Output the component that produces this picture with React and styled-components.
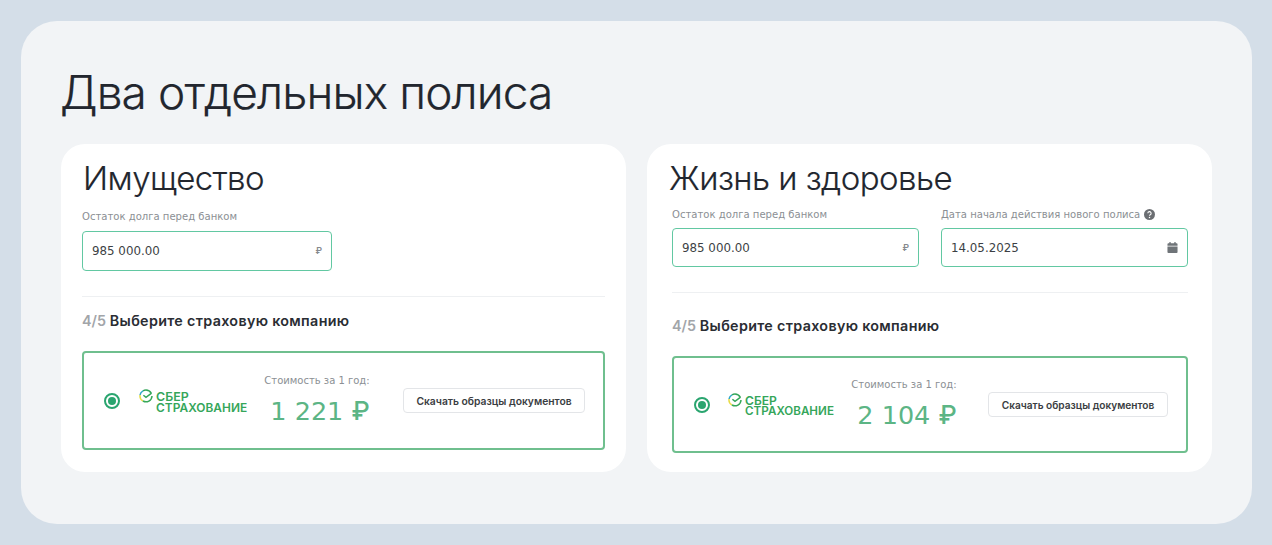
import React from "react";
import styled, { createGlobalStyle } from "styled-components";

const Global = createGlobalStyle`
  html, body { margin: 0; padding: 0; background: #d4dee8; }
  * { box-sizing: border-box; }
  body { font-family: "Inter", sans-serif; }
`;
const Page = styled.div`
  width: 1272px; height: 545px; padding: 21px 20px 21px 21px; overflow: hidden;
`;
const Panel = styled.main`
  width: 1231px; height: 503px; background: #f2f4f6; border-radius: 36px; padding: 40px 40px 0;
`;
const Title = styled.h1`
  margin: 0 0 0 -1px; height: 83px; font: 300 46px/62px "Inter", sans-serif; color: #22262e; letter-spacing: -0.88px;
  -webkit-text-stroke: 0.2px #22262e;
`;
const Cards = styled.div`
  display: grid; grid-template-columns: 565px 565px; gap: 21px;
`;
const Card = styled.section`
  height: 328px; background: #fff; border-radius: 24px;
  padding: ${p => p.$pad};
`;
const CardTitle = styled.h2`
  margin: 0 0 0 ${p => p.$shift}px; font: 300 33px/40px "Inter", sans-serif; color: #22262e; letter-spacing: -0.55px;
  -webkit-text-stroke: 0.15px #22262e;
`;
const Fields = styled.div`
  display: flex; gap: 22px; margin-top: ${p => p.$top}px;
`;
const Field = styled.div`
  width: ${p => p.$w}px;
`;
const Label = styled.div`
  display: flex; align-items: center; gap: 4px; white-space: nowrap;
  font: 400 10.05px/13px "DejaVu Sans", sans-serif; color: #8b8f94;
  margin-bottom: ${p => p.$gap}px;
`;
const Input = styled.div`
  height: ${p => p.$h}px; border: 1px solid #62c8a2; border-radius: 4px; padding: 0 9px;
  display: flex; align-items: center; justify-content: space-between;
  font: 400 11.85px/16px "DejaVu Sans", sans-serif; color: #3c3f44; background: #fff;
`;
const Suffix = styled.span`
  font: 600 9px/12px "Inter", sans-serif; color: #85898e;
`;
const Divider = styled.hr`
  margin: ${p => p.$top}px 0 0; border: 0; border-top: 1px solid #eef0f2;
`;
const Step = styled.div`
  margin-top: ${p => p.$top}px; font: 600 14.3px/18px "Inter", sans-serif; color: #2a2d33; letter-spacing: 0.33px;
`;
const StepNum = styled.span`
  color: #a2a5a9; letter-spacing: 0;
`;
const Offer = styled.div`
  margin-top: ${p => p.$top}px; height: ${p => p.$h}px; border: 2px solid #6fbf8e; border-radius: 4px;
  display: flex; align-items: center; padding-left: ${p => p.$pl}px;
`;
const Radio = styled.span`
  width: 16px; height: 16px; border-radius: 50%; border: 2px solid #2aa56f; flex: none;
  display: flex; align-items: center; justify-content: center;
  &::after { content: ""; width: 8px; height: 8px; border-radius: 50%; background: #2aa56f; }
`;
const Logo = styled.div`
  margin-left: ${p => p.$ml}px; width: 110px; flex: none; position: relative; padding: 2px 0 0 17px;
  color: #35a65a; font: 600 ${p => p.$size + 0.5}px/11px "Inter", sans-serif;
`;
const LogoMark = styled.svg`
  position: absolute; left: 0; top: 0;
`;
const LogoBottom = styled.div`
  font-size: ${p => p.$size}px; letter-spacing: 0.05px; white-space: nowrap;
`;
const Cost = styled.div`
  margin-left: ${p => p.$ml}px; width: ${p => p.$w}px; flex: none; display: flex; flex-direction: column; align-items: center;
`;
const CostLabel = styled.div`
  font: 400 10px/13px "DejaVu Sans", sans-serif; color: #8b8f94; white-space: nowrap;
`;
const Price = styled.div`
  margin: 8px 0 0 6px; font: 400 25.5px/32px "DejaVu Sans", sans-serif; color: #5cb585; white-space: nowrap;
`;
const Ruble = styled.span`
  font-family: "Inter", sans-serif; font-weight: 500;
`;
const DocButton = styled.button`
  margin-left: ${p => p.$ml}px; width: ${p => p.$w}px; height: ${p => p.$h}px; flex: none; background: #fff;
  border: 1px solid #e3e5e8; border-radius: 4px; padding: 0; cursor: pointer;
  font: 600 ${p => p.$size}px/12px "Inter", sans-serif; color: #3a3d42; white-space: nowrap;
`;
const HelpIcon = styled.svg`flex: none;`;

const Help = () => (
  <HelpIcon width="11" height="11" viewBox="0 0 12 12">
    <circle cx="6" cy="6" r="6" fill="#6b6e72" />
    <path d="M4.2 4.7a1.8 1.8 0 1 1 2.6 1.6c-.6.3-.8.6-.8 1.1" fill="none" stroke="#fff" strokeWidth="1.2" />
    <circle cx="6" cy="9.2" r=".8" fill="#fff" />
  </HelpIcon>
);
const Calendar = () => (
  <svg width="11" height="11" viewBox="0 0 11 12" fill="#6f7478">
    <rect x="2" y="0" width="1.6" height="2.4" rx=".5" />
    <rect x="7.4" y="0" width="1.6" height="2.4" rx=".5" />
    <path d="M1 1.4h9a1 1 0 0 1 1 1v1.6H0V2.4a1 1 0 0 1 1-1z" />
    <path d="M0 4.8h11V11a1 1 0 0 1-1 1H1a1 1 0 0 1-1-1z" />
  </svg>
);
const SberLogo = ({ ml, size }) => (
  <Logo $ml={ml} $size={size}>
    <LogoMark width="14" height="14" viewBox="0 0 14 14" fill="none">
      <path d="M12.2 4.2A6 6 0 0 0 7 1a6 6 0 0 0-3 .8" stroke="#35a65a" strokeWidth="1.5" />
      <path d="M4 1.8A6 6 0 0 0 1 6" stroke="#2fa8c8" strokeWidth="1.5" />
      <path d="M1 6a6 6 0 0 0 3 6" stroke="#e8dc4a" strokeWidth="1.5" />
      <path d="M4 12a6 6 0 0 0 9-5" stroke="#37a85a" strokeWidth="1.5" />
      <path d="M4.4 6.2 7 8.4l5.6-4.2" stroke="#35a65a" strokeWidth="1.5" />
    </LogoMark>
    <div>СБЕР</div>
    <LogoBottom $size={size}>СТРАХОВАНИЕ</LogoBottom>
  </Logo>
);

export default function App() {
  return (
    <Page>
      <Global />
      <Panel>
        <Title>Два отдельных полиса</Title>
        <Cards>
          <Card $pad="14px 21px 0">
            <CardTitle $shift={1}>Имущество</CardTitle>
            <Fields $top={12}>
              <Field $w={250}>
                <Label $gap={8}>Остаток долга перед банком</Label>
                <Input $h={40}>985 000.00<Suffix>₽</Suffix></Input>
              </Field>
            </Fields>
            <Divider $top={25} />
            <Step $top={15}><StepNum>4/5</StepNum> Выберите страховую компанию</Step>
            <Offer $top={21} $h={99} $pl={20}>
              <Radio />
              <SberLogo ml={19} size={11.9} />
              <Cost $ml={-1} $w={138}>
                <CostLabel>Стоимость за 1 год:</CostLabel>
                <Price>1 221 <Ruble>₽</Ruble></Price>
              </Cost>
              <DocButton $ml={17} $w={182} $h={25} $size={10.3}>Скачать образцы документов</DocButton>
            </Offer>
          </Card>
          <Card $pad="14px 24px 0 25px">
            <CardTitle $shift={-3}>Жизнь и здоровье</CardTitle>
            <Fields $top={10}>
              <Field $w={247}>
                <Label $gap={7}>Остаток долга перед банком</Label>
                <Input $h={39}>985 000.00<Suffix>₽</Suffix></Input>
              </Field>
              <Field $w={247}>
                <Label $gap={7}>Дата начала действия нового полиса <Help /></Label>
                <Input $h={39}>14.05.2025<Calendar /></Input>
              </Field>
            </Fields>
            <Divider $top={25} />
            <Step $top={24}><StepNum>4/5</StepNum> Выберите страховую компанию</Step>
            <Offer $top={21} $h={97} $pl={20}>
              <Radio />
              <SberLogo ml={18} size={11.6} />
              <Cost $ml={1} $w={130}>
                <CostLabel>Стоимость за 1 год:</CostLabel>
                <Price>2 104 <Ruble>₽</Ruble></Price>
              </Cost>
              <DocButton $ml={19} $w={180} $h={25} $size={10.15}>Скачать образцы документов</DocButton>
            </Offer>
          </Card>
        </Cards>
      </Panel>
    </Page>
  );
}
